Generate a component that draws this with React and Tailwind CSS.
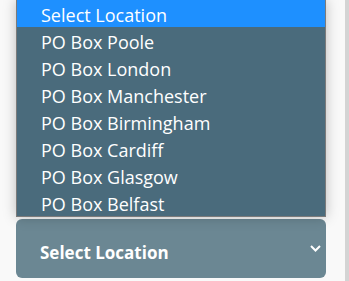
import React from "react";

const items = [
  "PO Box Poole",
  "PO Box London",
  "PO Box Manchester",
  "PO Box Birmingham",
  "PO Box Cardiff",
  "PO Box Glasgow",
  "PO Box Belfast",
];

export default function App() {
  return (
    <div className="w-[349px] h-[281px] bg-[#f9f9f9] flex overflow-hidden" style={{ fontFamily: '"Open Sans", sans-serif' }}>
      <div className="w-[345px] pl-4 pr-[19px] flex flex-col">
        <div className="relative z-10 border-x border-b border-[#7b7b7b] bg-[#4a6b7c] shadow-[0_0_12px_rgba(0,0,0,0.25)] text-white text-[18px]">
          <div className="h-[27px] bg-[#1e90ff] pl-6 pt-[2px] flex items-center leading-none">Select Location</div>
          {items.map((t) => (
            <div key={t} className="h-[27px] pl-6 pt-[3px] flex items-center leading-none">{t}</div>
          ))}
        </div>
        <div className="mt-[2px] h-[59px] rounded-md bg-[#6b8793] flex items-center justify-between pl-6 pr-[5px] text-white">
          <span className="font-bold text-[17px] leading-none mt-[7px]">Select Location</span>
          <svg width="11" height="7" viewBox="0 0 11 7">
            <path d="M1 1 L5.5 5.5 L10 1" stroke="white" strokeWidth="2" fill="none" />
          </svg>
        </div>
      </div>
      <div className="w-[4px] bg-[#d4d4d4]" />
    </div>
  );
}
